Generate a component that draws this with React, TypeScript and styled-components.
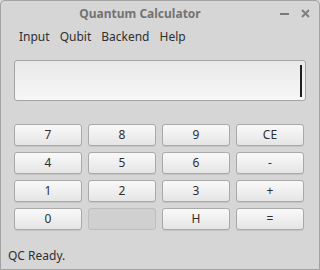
import styled, { createGlobalStyle } from "styled-components";

const GlobalStyle = createGlobalStyle`
  html, body {
    margin: 0;
    padding: 0;
    background: #d6d6d6;
  }
  * {
    box-sizing: border-box;
  }
`;

const Window = styled.div`
  width: 320px;
  height: 270px;
  display: flex;
  flex-direction: column;
  background: #d6d6d6;
  border: 1px solid #a2a2a2;
  border-radius: 5px 5px 0 0;
  font-family: "Noto Sans", "Open Sans", sans-serif;
  color: #2f2f2f;
  overflow: hidden;
`;

const TitleBar = styled.div`
  height: 25px;
  display: flex;
  align-items: center;
`;

const Title = styled.div`
  flex: 1;
  text-align: center;
  font-size: 12px;
  line-height: 18px;
  font-weight: bold;
  color: #737373;
`;

const Controls = styled.div`
  width: 40px;
  display: flex;
  align-items: center;
  gap: 12px;
  padding-left: 1px;
`;

const MenuBar = styled.div`
  height: 22px;
  display: flex;
  padding: 2px 0 0 13px;
`;

const MenuItem = styled.span`
  padding: 0 5px;
  font-size: 12px;
  line-height: 18px;
`;

const Body = styled.div`
  flex: 1;
  display: flex;
  flex-direction: column;
  padding: 12px 13px 0 13px;
`;

const Display = styled.div`
  height: 41px;
  display: flex;
  justify-content: flex-end;
  align-items: center;
  padding: 1px 3px 0 0;
  border: 1px solid #a4a4a4;
  border-radius: 3px;
  background: linear-gradient(to bottom, #e8e8e8, #f7f7f7);
`;

const Caret = styled.div`
  width: 2px;
  height: 32px;
  background: #1e1e1e;
`;

const Keypad = styled.div`
  margin-top: 23px;
  width: 290px;
  display: grid;
  grid-template-columns: repeat(4, 1fr);
  grid-auto-rows: 22px;
  gap: 6px;
`;

const Key = styled.button<{ $blank?: boolean }>`
  padding: 0;
  font-family: inherit;
  font-size: 12px;
  line-height: 18px;
  color: #2f2f2f;
  border: 1px solid ${({ $blank }) => ($blank ? "#bdbdbd" : "#a9a9a9")};
  border-radius: 3px;
  background: ${({ $blank }) =>
    $blank ? "#d0d0d0" : "linear-gradient(to bottom, #f9f9f9, #e5e5e5)"};
  box-shadow: ${({ $blank }) => ($blank ? "none" : "0 1px 0 rgba(0, 0, 0, 0.08)")};
`;

const StatusBar = styled.div`
  flex: 1;
  display: flex;
  align-items: flex-end;
  padding: 0 0 4px 7px;
  font-size: 12px;
  line-height: 18px;
`;

const keys = ["7", "8", "9", "CE", "4", "5", "6", "-", "1", "2", "3", "+", "0", "", "H", "="];

export default function App() {
  return (
    <>
      <GlobalStyle />
      <Window>
        <TitleBar>
          <Title>Quantum Calculator</Title>
          <Controls>
            <svg width="9" height="10" viewBox="0 0 9 10">
              <rect x="0" y="4" width="9" height="2" fill="#7a7a7a" />
            </svg>
            <svg width="9" height="9" viewBox="0 0 9 9">
              <path d="M1 1 L8 8 M8 1 L1 8" stroke="#7f7f7f" strokeWidth="2" />
            </svg>
          </Controls>
        </TitleBar>
        <MenuBar>
          <MenuItem>Input</MenuItem>
          <MenuItem>Qubit</MenuItem>
          <MenuItem>Backend</MenuItem>
          <MenuItem>Help</MenuItem>
        </MenuBar>
        <Body>
          <Display>
            <Caret />
          </Display>
          <Keypad>
            {keys.map((k, i) => (
              <Key key={i} $blank={k === ""} disabled={k === ""}>
                {k}
              </Key>
            ))}
          </Keypad>
        </Body>
        <StatusBar>QC Ready.</StatusBar>
      </Window>
    </>
  );
}
